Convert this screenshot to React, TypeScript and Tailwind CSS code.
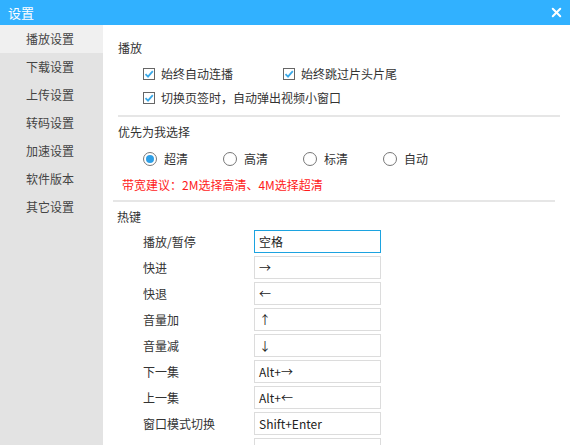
import { X } from "lucide-react";

const MENU = ["播放设置", "下载设置", "上传设置", "转码设置", "加速设置", "软件版本", "其它设置"];

const HOTKEYS: [string, string][] = [
  ["播放/暂停", "空格"],
  ["快进", "→"],
  ["快退", "←"],
  ["音量加", "↑"],
  ["音量减", "↓"],
  ["下一集", "Alt+→"],
  ["上一集", "Alt+←"],
  ["窗口模式切换", "Shift+Enter"],
  ["", ""],
];

function Check({ label }: { label: string }) {
  return (
    <div className="flex items-center">
      <span className="w-[12px] h-[12px] border border-[#666] bg-white flex items-center justify-center">
        <svg width="10" height="10" viewBox="0 0 10 10">
          <path d="M1.5 5.2 L4 7.6 L8.8 2.2" fill="none" stroke="#3aa9e8" strokeWidth="1.8" />
        </svg>
      </span>
      <span className="ml-[6px]">{label}</span>
    </div>
  );
}

function Radio({ label, on }: { label: string; on?: boolean }) {
  return (
    <div className="flex items-center w-[80px]">
      <span className="w-[14px] h-[14px] rounded-full border border-[#777] bg-white flex items-center justify-center">
        {on && <span className="w-[8px] h-[8px] rounded-full bg-[#2e9fe6]" />}
      </span>
      <span className="ml-[7px]">{label}</span>
    </div>
  );
}

export default function App() {
  return (
    <div
      className="w-[570px] h-[445px] flex flex-col overflow-hidden text-[12px] text-[#333] bg-white"
      style={{ fontFamily: '"Microsoft YaHei", "Noto Sans CJK SC", sans-serif' }}
    >
      {/* Title bar */}
      <div className="h-[25px] shrink-0 bg-[#31b1ff] flex items-center justify-between pl-[8px] pr-[6px] text-white">
        <span className="text-[13px]">设置</span>
        <X size={15} strokeWidth={3.2} />
      </div>

      <div className="flex flex-1 min-h-0">
        {/* Sidebar */}
        <div className="w-[103px] shrink-0 bg-[#e3e3e3]">
          {MENU.map((m, i) => (
            <div
              key={m}
              className={`h-[28px] flex items-center pl-[26px] text-[#444] ${i === 0 ? "bg-[#f0f0f0] h-[27px]" : ""}`}
            >
              {m}
            </div>
          ))}
        </div>

        {/* Content */}
        <div className="flex-1 overflow-hidden pt-[13px]">
          <div className="h-[20px] flex items-center pl-[15px]">播放</div>
          <div className="mt-[4px] h-[24px] flex items-center pl-[40px]">
            <div className="w-[140px]"><Check label="始终自动连播" /></div>
            <Check label="始终跳过片头片尾" />
          </div>
          <div className="h-[24px] flex items-center pl-[40px]">
            <Check label="切换页签时，自动弹出视频小窗口" />
          </div>
          <div className="mt-[5px] ml-[15px] mr-[10px] h-[2px] bg-[#e6e6e6]" />

          <div className="mt-[5px] h-[20px] flex items-center pl-[15px]">优先为我选择</div>
          <div className="mt-[5px] h-[24px] flex items-center pl-[40px]">
            <Radio label="超清" on />
            <Radio label="高清" />
            <Radio label="标清" />
            <Radio label="自动" />
          </div>
          <div className="mt-[4px] h-[20px] flex items-center pl-[19px] text-[#ff1a1a]">
            带宽建议：2M选择高清、4M选择超清
          </div>
          <div className="mt-[5px] ml-[10px] mr-[15px] h-[2px] bg-[#e6e6e6]" />

          <div className="mt-[5px] h-[20px] flex items-center pl-[14px]">热键</div>
          <div className="mt-[3px] flex flex-col gap-[3px]">
            {HOTKEYS.map(([k, v], i) => (
              <div key={i} className="flex items-center h-[23px] shrink-0">
                <div className="w-[151px] pl-[40px] shrink-0">{k}</div>
                <div
                  className={`w-[127px] h-[23px] flex items-center pl-[4px] bg-white text-[#222] border ${
                    i === 0 ? "border-[#1ca3e0]" : "border-[#dcdcdc]"
                  }`}
                >
                  {v}
                </div>
              </div>
            ))}
          </div>
        </div>
      </div>
    </div>
  );
}
